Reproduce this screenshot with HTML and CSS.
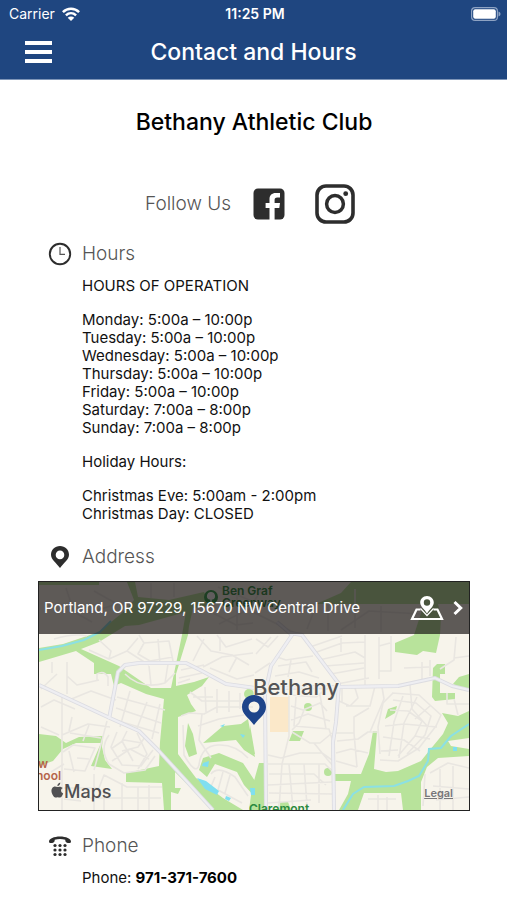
FILE: index.html
```html
<!DOCTYPE html>
<html lang="en">
<head>
<meta charset="utf-8">
<meta name="viewport" content="width=device-width, initial-scale=1">
<title>Contact and Hours</title>
<link rel="stylesheet" href="styles.css">
</head>
<body>
<header class="topbar">
  <div class="status">
    <div class="carrier">
      <span>Carrier</span>
      <svg class="wifi" width="18" height="14" viewBox="0 0 18 14" aria-hidden="true">
        <g fill="none" stroke="#fff" stroke-width="2.5">
          <path d="M.9 5.1C5.500.6 12.500.6 17.100 5.100"/>
          <path d="M3.900 8.300C6.900 5.500 11.100 5.500 14.100 8.300"/>
        </g>
        <path d="M9 14 5.700 10.700C7.600 9 10.400 9 12.300 10.700Z" fill="#fff"/>
      </svg>
    </div>
    <span class="clock">11:25 PM</span>
    <svg class="battery" width="30" height="14" viewBox="0 0 30 14" aria-hidden="true">
      <rect x=".6" y=".6" width="25.800" height="12.800" rx="3.500" fill="none" stroke="#8ea3c3" stroke-width="1.200"/>
      <rect x="2.200" y="2.200" width="22.600" height="9.600" rx="2" fill="#fff"/>
      <path d="M27.500 4.600C30.200 5.500 30.200 8.500 27.500 9.400Z" fill="#8ea3c3"/>
    </svg>
  </div>
  <div class="nav">
    <button class="menu" type="button" aria-label="Menu"><span></span><span></span><span></span></button>
    <h1>Contact and Hours</h1>
  </div>
</header>

<main>
  <h2 class="club">Bethany Athletic Club</h2>

  <div class="follow">
    <span class="follow-label">Follow Us</span>
    <a class="facebook" href="#" aria-label="Facebook">
      <svg width="32" height="32" viewBox="0 0 32 32">
        <rect x=".5" y=".5" width="31" height="31" rx="4.500" fill="#2d2d2d"/>
        <path d="M16.500 32V20H12.600V15H16.500V11.200C16.500 7 19 4.900 22.600 4.900L27 5.100V9.500H24.300C22.200 9.500 21.600 10.400 21.600 12V15H27L26.300 20H21.600V32Z" fill="#fff"/>
      </svg>
    </a>
    <a href="#" aria-label="Instagram">
      <svg width="40" height="40" viewBox="0 0 40 40">
        <rect x="2" y="2" width="36" height="36" rx="9" fill="none" stroke="#2d2d2d" stroke-width="3.600"/>
        <circle cx="20" cy="20" r="8.400" fill="none" stroke="#2d2d2d" stroke-width="3.500"/>
        <circle cx="30.700" cy="9.700" r="2.400" fill="#2d2d2d"/>
      </svg>
    </a>
  </div>

  <section class="section">
    <h3 class="heading">
      <svg width="24" height="24" viewBox="0 0 24 24" aria-hidden="true">
        <circle cx="12" cy="12" r="10.200" fill="none" stroke="#2d2d2d" stroke-width="1.900"/>
        <path d="M12 5V12.400H17" fill="none" stroke="#555" stroke-width="1.200"/>
      </svg>
      Hours
    </h3>
    <div class="details hours">
      <p>HOURS OF OPERATION</p>
      <p>Monday: 5:00a – 10:00p<br>Tuesday: 5:00a – 10:00p<br>Wednesday: 5:00a – 10:00p<br>Thursday: 5:00a – 10:00p<br>Friday: 5:00a – 10:00p<br>Saturday: 7:00a – 8:00p<br>Sunday: 7:00a – 8:00p</p>
      <p>Holiday Hours:</p>
      <p>Christmas Eve: 5:00am - 2:00pm<br>Christmas Day: CLOSED</p>
    </div>
  </section>

  <section class="section">
    <h3 class="heading">
      <svg width="24" height="24" viewBox="0 0 24 24" aria-hidden="true">
        <path fill-rule="evenodd" d="M12 1C6.900 1 3 4.900 3 9.700C3 14.800 8.300 17.600 12 23C15.700 17.600 21 14.800 21 9.700C21 4.900 17.100 1 12 1ZM12 5.600A4.300 4.300 0 1 1 12 14.200A4.300 4.300 0 1 1 12 5.600Z" fill="#2d2d2d"/>
      </svg>
      Address
    </h3>
    <div class="map">
      <svg class="map-art" viewBox="0 0 430 228" role="img" aria-label="Map of Bethany">
        <rect width="430" height="228" fill="#f7f4eb"/>
        <g fill="#b8e39b">
          <path d="M0 0H60V3H0Z"/>
          <path d="M0 66 24 62 60 50 88 27 95 18 88 0H96L99 15 130 18 165 10 172 24 154 26 150 44 149 53 137 92V104L155 100 170 95 163 104 148 113 152 122 157 129 139 135V172L157 196 184 216 204 228H174L136 190V206L142 206 139 212 132 210V228H125L123 201 87 200V191L120 184 121 160 125 117 107 112 82 101 75 104 72 92H55V81L37 69 0 80ZM42 67 80 84 112 106 132 106 143 53 147 30 100 43 86 44 60 60Z" fill-rule="evenodd"/>
          <path d="M0 152 17 154 27 161 40 155 64 154 63 165 66 178 73 187 52 184 62 161H37L24 167 14 179 0 184Z"/>
          <path d="M149 141 154 152 158 172 150 175 146 164Z"/>
          <path d="M164 161 184 144 202 142 209 137 216 175 205 168 197 158Z"/>
          <path d="M164 176 180 171 204 181 216 199V215L205 203 198 190 176 182 168 195 160 188Z"/>
          <path d="M211 143 216 172H211ZM220 181H227V228H210L213 206Z"/>
          <path d="M334 149H338L335 187 347 190 359 189 382 179 390 169 404 152 409 141 403 131 419 134 430 129V156L409 159 412 164 430 167V174L399 176 388 185 382 200V228H364L362 211H325L319 228H300L309 212 312 199H295V192H322L330 172Z"/>
          <path d="M277 22 302 11 312 0H430V22H399L402 34 401 53 397 71 384 69 378 73 356 70V61L375 53 385 22Z"/>
          <path d="M394 86 398 82H406V92H401V111H416V117L396 119 393 115ZM414 102 420 95 430 92V106H422Z"/>
          <path d="M346 137 349 127 358 124 356 131ZM250 159 254 149H265L261 159ZM239 228 240 220H249L252 228Z"/>
          <circle cx="269" cy="125" r="4"/><circle cx="289" cy="190" r="4"/><circle cx="210" cy="112" r="5"/>
        </g>
        <path d="M231 115H250V150H231Z" fill="#fbe8c9"/>

        <g fill="none" stroke="#e9e6e1" stroke-width="1.600" stroke-linejoin="round">
          <path d="M2 107 18 92M28 112V80M28 94 38 103 60 98M13 80V91M58 100V92Q65 88 69 95V104M50 68 70 77 72 69 60 58M70 77 88 69 99 56M88 69 110 83M100 53 105 61 130 59 134 79M105 61 99 72 111 79 134 75M119 57 121 82M86 92Q102 108 126 101L129 82M110 84 112 103M126 101 136 91M15 57Q35 51 48 54"/>
          <path d="M2 125 15 118 36 127M23 115V228M2 145 20 153M23 153 49 142 71 145M30 118 52 109 77 118M78 115 126 128M77 126 122 141M73 137 120 151M91 109 81 145M108 120 97 149M121 122 113 157M68 139 60 170 55 188M50 143 44 159M31 151 62 156M33 135 30 149"/>
          <path d="M24 170 34 163 56 166 46 189 25 187M30 169 35 190M38 176 50 177M25 182 12 190M25 206H60L65 193 88 205H123M55 192V228M65 206V228M83 201V228M99 205V228M110 203V228M50 216H122M25 217 42 219"/>
          <path d="M70 153Q60 167 70 182L85 191 106 188 116 174M78 150 72 165 83 183 102 184 114 168M88 149 83 159 94 179M106 155 99 165 83 169M98 151 108 172 99 187M72 167 85 158 103 161M73 179 91 167 110 177"/>
          <path d="M142 134 150 131 165 132 178 125 214 125M151 110 163 119 210 119M166 105 167 130M178 107 178 131M190 109V130M201 111V127M154 115H174M142 88 165 83M140 96 163 91M139 101 151 97M154 79 165 57M164 85 183 75 214 71M158 54 172 69 193 73 210 83M178 53 187 65 213 57M171 86 198 97 215 93M198 75 190 90M181 55V69"/>
          <path d="M144 143 145 173Q157 194 160 183Q162 164 179 163T209 176M163 132 160 158 172 176M159 144 180 137 205 133M172 192Q179 183 196 195L209 214M176 195 171 207M184 190 179 208 203 221M191 193 186 211"/>
          <path d="M217 72 232 55M217 57 229 65 239 54M216 91 231 81M238 75 247 78 274 74M239 84 267 80 273 90M236 94 260 90 280 96M252 78 249 95M271 65 303 54M275 71 303 61 326 60M280 78 316 70 326 76M286 84 325 81M292 92 325 86M298 102 330 96M302 56V70M326 53V104M340 55V97M352 54V89H340M340 64 351 61M383 80V97M391 78V94M365 86 390 85M417 55 415 78 401 87M415 76 430 74M303 105V120M316 106 319 116 311 124 300 119M336 104 331 124H307M343 105 345 117 331 150M371 103 373 127"/>
          <path d="M251 113 277 115 291 104M252 124 264 128 281 121 288 129M252 138 269 132 291 139M265 128 260 141 253 148M281 113 287 147M257 115 255 144 290 147 294 160M250 112V154L243 182 240 227M253 150 271 161H281L293 151M275 161 288 177 295 185M229 173 242 176 261 171H283L293 178M229 182H286L294 190M230 192H275L287 203M229 203 293 200M250 182 254 227M265 182 268 224M280 182V221M230 211 294 212M229 221 272 218M296 151H315V135L330 126M315 151 318 185M297 171 312 167 329 171M297 179 318 185M298 159 319 157 329 150H340"/>
          <path d="M354 111 344 121 339 145 341 172M353 111 380 113 402 133 397 144 380 166 359 179 341 178M354 118 377 121 392 134 386 153 368 172M351 128 369 129 383 139 376 154 359 174M346 144 365 142 398 145M344 155 365 158 381 169M342 169 359 168M364 114 355 140 350 174M378 115 365 141 360 176M391 124 376 137M376 154 391 157M373 127 389 145M408 111V122H430M415 117 419 133M391 191 409 181 430 186M394 204 430 207M397 218 430 215M401 187V228M414 184V228M386 192 384 224"/>
          <path d="M329 217H357M339 213V228M348 215V228M316 7V46M342 24V50M302 48 330 29 382 32M275 29 268 47M289 23V49M198 8V48M212 29 256 51M225 4 210 27 180 42M174 31 197 43 214 41M55 9 78 22 49 31M27 6 35 30 53 40M112 1V16M135 1V15M179 5 220 22M233 22 274 26"/>
        </g>
        <g fill="none" stroke="#dcdce1" stroke-width="4" stroke-linejoin="round">
          <path d="M0 103 73 137 100 149 120 169 174 228M70 137 79 90 86 83 100 81H147L163 89 187 102 216 106 299 105 359 104 396 96 413 104 430 108M238 40 253 53 232 84 226 112 227 228M251 51 263 53 300 102 297 140 294 160 295 228"/>
        </g>
        <g fill="none" stroke="#eeeef2" stroke-width="2.300" stroke-linejoin="round">
          <path d="M0 103 73 137 100 149 120 169 174 228M70 137 79 90 86 83 100 81H147L163 89 187 102 216 106 299 105 359 104 396 96 413 104 430 108M238 40 253 53 232 84 226 112 227 228M251 51 263 53 300 102 297 140 294 160 295 228"/>
        </g>
        <g fill="none" stroke="#8be0e4" stroke-width="2">
          <path d="M0 68 23 64 45 58 61 50 72 39"/>
          <path d="M430 142 412 154 402 166 390 167 389 179 380 194 369 199 355 204 325 205 314 212 304 228"/>
        </g>
        <g fill="#80dff0">
          <path d="M158 196 167 199 180 209 178 213 166 207ZM164 181 170 179 169 185 163 184ZM187 214 192 216 190 219 186 217ZM201 152 206 153 204 156ZM181 144 186 142 184 145ZM211 206H216V213H212ZM414 165H418V169H414Z"/>
        </g>
        <g class="place-minor">
          <circle cx="172" cy="15" r="7" fill="#2f9f4c"/>
          <path d="M172 10A4 4 0 0 0 170 17.500H171.300V20H172.700V17.500H174A4 4 0 0 0 172 10Z" fill="#fff"/>
          <text x="183" y="13" fill="#2b8a3e">Ben Graf</text>
          <text x="183" y="25" fill="#2b8a3e">Greenway</text>
          <text x="210" y="231" fill="#2b8a3e">Claremont</text>
        </g>
        <g class="place-school"><text x="-1" y="186">w</text><text x="-3" y="198">hool</text></g>
        <text class="place-town" x="214" y="113">Bethany</text>
        <path d="M215 113C208 113 203 118.500 203 125C203 132 209 135 215 143C221 135 227 132 227 125C227 118.500 222 113 215 113ZM215 119.500A5.500 5.500 0 1 1 215 130.500A5.500 5.500 0 1 1 215 119.500Z" fill="#1d448a" fill-rule="evenodd"/>
        <path d="M22.500 205.200C20.500 204.300 19 205 18.300 205C17.500 205 16.300 204.300 15 204.700C11.700 205.700 11.700 210.500 14.500 214.200C16.500 216.500 17 215.200 18.700 215.200S21 216.500 22.800 214.200Q23.800 212.900 24.200 211.500C21.200 210 21.600 207 23.800 206ZM18.400 204.200C18.300 202.300 19.700 200.800 21.300 200.600C21.500 202.500 20 204.200 18.400 204.200Z" fill="#505052"/>
        <text class="brand" x="25" y="216">Maps</text>
      </svg>
      <a class="address" href="#">
        <span class="address-text">Portland, OR 97229, 15670 NW Central Drive</span>
        <svg width="34" height="26" viewBox="0 0 34 26" aria-hidden="true">
          <path d="M10.500 14.500H6.500L2 24H32L27.500 14.500H23.500" fill="none" stroke="#fff" stroke-width="2.200"/>
          <path d="M17 1C12.900 1 10.200 4 10.200 7.400C10.200 11.500 14.500 14 17 18.500C19.500 14 23.800 11.500 23.800 7.400C23.800 4 21.100 1 17 1ZM17 4.300A3.200 3.200 0 1 1 17 10.700A3.200 3.200 0 1 1 17 4.300Z" fill="#fff" fill-rule="evenodd"/>
          <path d="M10.500 13.500 17 20.500 23.500 13.500" fill="none" stroke="#fff" stroke-width="1.200"/>
        </svg>
        <svg width="12" height="16" viewBox="0 0 12 16" aria-hidden="true">
          <path d="M2.500 2 8.700 8 2.500 14" fill="none" stroke="#fff" stroke-width="3"/>
        </svg>
      </a>
      <a class="legal" href="#">Legal</a>
    </div>
  </section>

  <section class="section section-phone">
    <h3 class="heading">
      <svg width="24" height="24" viewBox="0 0 24 24" aria-hidden="true">
        <path d="M1 7.500C1 4.700 6 2.500 12 2.500S23 4.700 23 7.500C23 9.200 21.500 9.300 19.700 8.900C17.700 8.500 17.200 7.500 17.300 5.800C14 4.700 10 4.700 6.700 5.800C6.800 7.500 6.300 8.500 4.300 8.900C2.500 9.300 1 9.200 1 7.500Z" fill="#2d2d2d"/>
        <g fill="#2d2d2d">
          <circle cx="7" cy="11.500" r="1.600"/><circle cx="12" cy="11.500" r="1.600"/><circle cx="17" cy="11.500" r="1.600"/>
          <circle cx="7" cy="16" r="1.600"/><circle cx="12" cy="16" r="1.600"/><circle cx="17" cy="16" r="1.600"/>
          <circle cx="7" cy="20.500" r="1.600"/><circle cx="12" cy="20.500" r="1.600"/><circle cx="17" cy="20.500" r="1.600"/>
        </g>
      </svg>
      Phone
    </h3>
    <p class="details phone">Phone: <a href="tel:9713717600">971-371-7600</a></p>
  </section>
</main>
</body>
</html>
```
FILE: styles.css
```css
* {
  box-sizing: border-box;
}

body {
  margin: 0;
  background: #fff;
  color: #111;
  font-family: Inter, "Liberation Sans", sans-serif;
  font-size: 15px;
  line-height: 18px;
}

h1, h2, h3, p {
  margin: 0;
}

a {
  color: inherit;
  text-decoration: none;
}

svg {
  display: block;
  flex: none;
}

.topbar {
  background: #1f4680;
  color: #fff;
  border-bottom: 1px solid #7e95b8;
}

.status {
  display: grid;
  grid-template-columns: 1fr auto 1fr;
  align-items: center;
  height: 27px;
  padding: 0 6px 0 9px;
  font-size: 14px;
}

.carrier {
  display: flex;
  align-items: center;
  gap: 7px;
}

.clock {
  font-weight: 600;
}

.battery {
  justify-self: end;
}

.nav {
  display: grid;
  grid-template-columns: 52px 1fr 52px;
  align-items: center;
  height: 52px;
  padding-bottom: 3px;
}

.menu {
  display: flex;
  flex-direction: column;
  gap: 5px;
  width: 27px;
  margin-left: 25px;
  padding: 0;
  border: 0;
  background: none;
  cursor: pointer;
}

.menu span {
  height: 4px;
  background: #fff;
}

.nav h1,
.club {
  font-size: 23px;
  font-weight: 500;
  line-height: 32px;
  text-align: center;
}

main {
  padding: 26px 37px 16px 38px;
}

.club {
  color: #000;
}

.follow {
  display: flex;
  align-items: center;
  justify-content: center;
  margin: 46px 8px 0 0;
}

.follow-label {
  color: #555;
  font-size: 19px;
  font-weight: 300;
  line-height: 24px;
}

.facebook {
  margin: 0 30px 0 22px;
}

.section {
  margin-top: 18px;
}

.heading {
  display: flex;
  align-items: center;
  gap: 10px;
  padding-left: 10px;
  color: #555;
  font-size: 19px;
  font-weight: 300;
  line-height: 24px;
}

.details {
  padding-left: 44px;
}

.hours {
  display: flex;
  flex-direction: column;
  gap: 16px;
  margin-top: 11px;
  margin-bottom: 22px;
}

.map {
  position: relative;
  margin-top: 12px;
  border: 1px solid #222;
  overflow: hidden;
}

.map-art {
  width: 100%;
  height: auto;
}

.place-minor {
  font-size: 12px;
  font-weight: 600;
}

.place-school {
  fill: #b5654a;
  font-size: 12px;
  font-weight: 600;
}

.place-town {
  fill: #545456;
  stroke: #f7f4eb;
  stroke-width: 2px;
  paint-order: stroke;
  font-size: 22px;
  font-weight: 500;
}

.brand {
  fill: #505052;
  font-size: 18px;
  font-weight: 500;
}

.address {
  position: absolute;
  inset: 0 0 auto 0;
  display: flex;
  align-items: center;
  gap: 8px;
  height: 52px;
  padding: 0 5px;
  background: rgba(20, 16, 16, 0.68);
  color: #fff;
}

.address-text {
  flex: 1;
}

.legal {
  position: absolute;
  right: 16px;
  bottom: 8px;
  color: #77777a;
  font-size: 11px;
  font-weight: 600;
  text-decoration: underline;
}

.section-phone {
  margin-top: 23px;
}

.phone {
  margin-top: 11px;
}

.phone a {
  color: #000;
  font-weight: 700;
}
```
